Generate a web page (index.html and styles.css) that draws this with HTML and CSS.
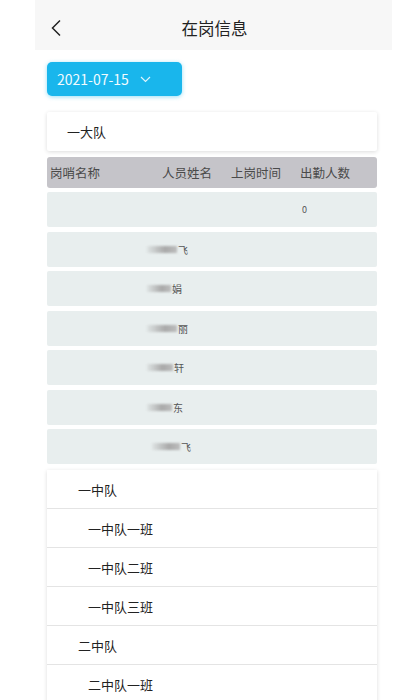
FILE: index.html
```html
<!DOCTYPE html>
<html lang="zh-CN">
<head>
<meta charset="utf-8">
<title>在岗信息</title>
<link rel="stylesheet" href="styles.css">
</head>
<body>
<div class="screen">
  <header class="topbar">
    <svg class="back" width="12" height="18" viewBox="0 0 12 18"><path d="M10 1.5 L2.5 9 L10 16.5" fill="none" stroke="#222" stroke-width="1.5"/></svg>
    <div class="title">在岗信息</div>
  </header>
  <main class="content">
    <div class="date-btn">
      <span>2021-07-15</span>
      <svg width="11" height="7" viewBox="0 0 11 7"><path d="M1 1 L5.5 5.5 L10 1" fill="none" stroke="#dff4fc" stroke-width="1.2"/></svg>
    </div>
    <div class="card group">一大队</div>
    <div class="table">
      <div class="thead">
        <span>岗哨名称</span><span>人员姓名</span><span>上岗时间</span><span>出勤人数</span>
      </div>
      <div class="row"><span></span><span></span><span class="count">0</span></div>
      <div class="row"><span></span><span class="name"><i class="blur w30"></i>飞</span><span></span></div>
      <div class="row"><span></span><span class="name"><i class="blur w24"></i>娟</span><span></span></div>
      <div class="row"><span></span><span class="name"><i class="blur w30"></i>丽</span><span></span></div>
      <div class="row"><span></span><span class="name"><i class="blur w26"></i>轩</span><span></span></div>
      <div class="row"><span></span><span class="name"><i class="blur w25"></i>东</span><span></span></div>
      <div class="row"><span></span><span class="name shift"><i class="blur w28"></i>飞</span><span></span></div>
    </div>
    <div class="list">
      <div class="item lvl1">一中队</div>
      <div class="item lvl2">一中队一班</div>
      <div class="item lvl2">一中队二班</div>
      <div class="item lvl2">一中队三班</div>
      <div class="item lvl1">二中队</div>
      <div class="item lvl2">二中队一班</div>
    </div>
  </main>
</div>
</body>
</html>
```
FILE: styles.css
```css
html, body {
  margin: 0;
  padding: 0;
  background: #ffffff;
  font-family: "Noto Sans CJK SC", "Noto Sans", sans-serif;
  color: #222;
}
.screen {
  margin-left: 35px;
  width: 357px;
  height: 700px;
  overflow: hidden;
}
.topbar {
  height: 50px;
  background: #f7f7f7;
  display: flex;
  align-items: center;
  position: relative;
}
.back {
  margin-left: 15px;
  margin-top: 6px;
}
.title {
  position: absolute;
  left: 0;
  right: 0;
  top: 14px;
  text-align: center;
  font-size: 16.5px;
  line-height: 28px;
  color: #222;
  padding-left: 2px;
}
.content {
  padding: 12px 0 0 12px;
  width: 330px;
  display: flex;
  flex-direction: column;
}
.date-btn {
  width: 135px;
  height: 34px;
  box-sizing: border-box;
  background: #19b6ec;
  border-radius: 5px;
  box-shadow: 0 1px 4px rgba(25, 182, 236, 0.45);
  color: #ffffff;
  font-size: 14px;
  display: flex;
  align-items: center;
  padding-left: 10px;
  gap: 11px;
}
.date-btn span {
  color: #f2fbff;
}
.card {
  background: #fff;
  box-shadow: 0 1px 4px rgba(0, 0, 0, 0.14);
}
.group {
  margin-top: 16px;
  height: 39px;
  display: flex;
  align-items: center;
  padding-left: 20px;
  font-size: 13px;
  border-radius: 2px;
}
.table {
  margin-top: 6px;
  display: flex;
  flex-direction: column;
  gap: 4.5px;
}
.thead {
  height: 31px;
  background: #c5c4c9;
  border-radius: 3px;
  display: grid;
  grid-template-columns: 112px 69px 69px 1fr;
  align-items: center;
  padding-left: 3px;
  font-size: 12.5px;
  color: #4a4a4a;
  margin-bottom: -0.5px;
}
.row {
  height: 35px;
  background: #e8eeee;
  border-radius: 2px;
  display: grid;
  grid-template-columns: 100px 153px 1fr;
  align-items: center;
}
.count {
  font-size: 9px;
  color: #555;
  padding-left: 2px;
}
.name {
  font-size: 10px;
  color: #555;
  display: flex;
  align-items: center;
}
.name.shift {
  padding-left: 5px;
}
.blur {
  display: inline-block;
  height: 7px;
  background: linear-gradient(to right, rgba(170, 170, 170, 0.15), #a9a9a9 60%, #bdbdbd);
  filter: blur(1px);
  margin-right: 1px;
}
.w24 { width: 24px; }
.w25 { width: 25px; }
.w26 { width: 26px; }
.w28 { width: 28px; }
.w30 { width: 30px; }
.list {
  margin-top: 6px;
  display: flex;
  flex-direction: column;
  box-shadow: 0 1px 4px rgba(0, 0, 0, 0.14);
}
.item {
  height: 38px;
  background: #fff;
  border-top: 1px solid #e4e4e4;
  display: flex;
  align-items: center;
  font-size: 13px;
  color: #222;
}
.item:first-child {
  border-top: none;
}
.lvl1 { padding-left: 31px; }
.lvl2 { padding-left: 41px; }
```
